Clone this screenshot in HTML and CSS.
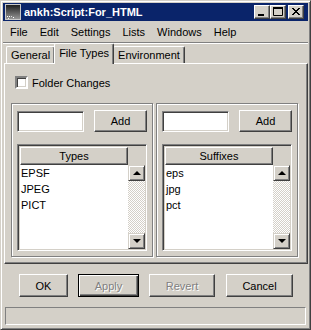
FILE: index.html
```html
<!doctype html>
<html lang="en">
  <head>
    <meta charset="UTF-8" />
    <title>ankh:Script:For_HTML</title>
    <link rel="stylesheet" href="styles.css">
  </head>
  <body>
    <div class="window">
      <div class="titlebar">
        <svg class="app-icon" width="16" height="16" viewBox="0 0 16 16">
          <defs>
            <linearGradient id="ig" x1="0" y1="0" x2="0" y2="1">
              <stop offset="0" stop-color="#1a1a1a" />
              <stop offset="1" stop-color="#9a9a9a" />
            </linearGradient>
          </defs>
          <rect x="0.5" y="0.5" width="15" height="15" fill="url(#ig)" stroke="#c8c8c8" />
          <rect x="2" y="12" width="1" height="1" fill="#fff" />
          <rect x="4" y="12" width="1" height="1" fill="#fff" />
          <rect x="6" y="12" width="1" height="1" fill="#ddd" />
          <rect x="8" y="13" width="1" height="1" fill="#fff" />
          <rect x="3" y="14" width="1" height="1" fill="#eee" />
        </svg>
        <span class="title">ankh:Script:For_HTML</span>
        <span class="caption-btns">
          <span class="cap-btn">
            <svg width="14" height="12" viewBox="0 0 14 12"><rect x="3" y="8" width="6" height="2" fill="#000" /></svg>
          </span>
          <span class="cap-btn">
            <svg width="14" height="12" viewBox="0 0 14 12"><path d="M2.5 1.5h9v8h-9z" fill="none" stroke="#000" /><rect x="2" y="1" width="10" height="2" fill="#000" /></svg>
          </span>
          <span class="cap-btn close">
            <svg width="14" height="12" viewBox="0 0 14 12"><path d="M3 2l7 7M4 2l7 7M10 2l-7 7M11 2l-7 7" stroke="#000" stroke-width="1" /></svg>
          </span>
        </span>
      </div>

      <div class="menubar">
        <span class="menu">File</span>
        <span class="menu">Edit</span>
        <span class="menu">Settings</span>
        <span class="menu">Lists</span>
        <span class="menu">Windows</span>
        <span class="menu">Help</span>
      </div>
      <div class="sep"></div>

      <div class="tabs">
        <span class="tab">General</span>
        <span class="tab active">File Types</span>
        <span class="tab">Environment</span>
      </div>

      <div class="panel">
        <label class="check"><span class="checkbox"></span>Folder Changes</label>

        <div class="groups">
          <div class="group">
            <div class="add-row">
              <span class="field"></span>
              <span class="btn add">Add</span>
            </div>
            <div class="listbox">
              <div class="list-head">Types</div>
              <div class="corner"></div>
              <div class="items">
                <div class="item">EPSF</div>
                <div class="item">JPEG</div>
                <div class="item">PICT</div>
              </div>
              <div class="scrollbar">
                <span class="arrow up"></span>
                <span class="track"></span>
                <span class="arrow down"></span>
              </div>
            </div>
          </div>

          <div class="group">
            <div class="add-row">
              <span class="field"></span>
              <span class="btn add">Add</span>
            </div>
            <div class="listbox">
              <div class="list-head">Suffixes</div>
              <div class="corner"></div>
              <div class="items">
                <div class="item">eps</div>
                <div class="item">jpg</div>
                <div class="item">pct</div>
              </div>
              <div class="scrollbar">
                <span class="arrow up"></span>
                <span class="track"></span>
                <span class="arrow down"></span>
              </div>
            </div>
          </div>
        </div>
      </div>

      <div class="actions">
        <span class="btn ok">OK</span>
        <span class="btn apply default disabled">Apply</span>
        <span class="btn revert disabled">Revert</span>
        <span class="btn cancel">Cancel</span>
      </div>

      <div class="statusbar"></div>
    </div>
  </body>
</html>
```

FILE: styles.css
```css
body {
  margin: 0;
  font-family: "Liberation Sans", Arial, sans-serif;
  font-size: 11px;
  color: #000;
}
.window {
  width: 311px;
  height: 330px;
  box-sizing: border-box;
  background: #d4d0c8;
  border: 1px solid;
  border-color: #d4d0c8 #404040 #404040 #d4d0c8;
  box-shadow: inset 1px 1px #fff, inset -1px -1px #808080;
  padding: 2px;
  display: flex;
  flex-direction: column;
}

/* title bar */
.titlebar {
  height: 18px;
  background: #0a246a;
  color: #fff;
  display: flex;
  align-items: center;
  padding: 0 4px 0 2px;
}
.app-icon {
  margin-right: 3px;
}
.title {
  flex: 1;
  font-weight: bold;
}
.caption-btns {
  display: flex;
}
.cap-btn {
  width: 14px;
  height: 12px;
  background: #d4d0c8;
  border: 1px solid;
  border-color: #fff #404040 #404040 #fff;
  box-shadow: inset -1px -1px #808080;
  display: flex;
}
.cap-btn.close {
  margin-left: 2px;
}

/* menu */
.menubar {
  height: 21px;
  display: flex;
  align-items: center;
  padding-left: 1px;
}
.menu {
  padding: 0 6px;
}
.sep {
  height: 1px;
  border-top: 1px solid #808080;
  background: #fff;
}

/* tabs */
.tabs {
  height: 19px;
  display: flex;
  align-items: flex-end;
  padding-left: 3px;
}
.tab {
  height: 16px;
  line-height: 16px;
  padding: 0 4px;
  border: 1px solid;
  border-color: #fff #404040 transparent #fff;
  border-bottom: none;
  box-shadow: inset -1px 0 #808080;
  border-radius: 2px 2px 0 0;
  background: #d4d0c8;
}
.tab.active {
  height: 20px;
  line-height: 18px;
  margin: 0 -1px -1px;
  position: relative;
  z-index: 1;
}

.panel {
  height: 201px;
  box-sizing: border-box;
  margin-left: 1px;
  border: 1px solid;
  border-color: #fff #404040 #404040 #fff;
  box-shadow: inset -1px -1px #808080;
  padding: 12px 0 0 10px;
}
.check {
  display: flex;
  align-items: center;
  height: 13px;
}
.checkbox {
  width: 9px;
  height: 9px;
  background: #fff;
  border: 2px solid;
  border-color: #808080 #fff #fff #808080;
  box-shadow: inset 1px 1px #404040, inset -1px -1px #d4d0c8;
  margin-right: 4px;
}

.groups {
  display: flex;
  gap: 3px;
  margin: 14px 0 0 -4px;
}
.group {
  width: 142px;
  height: 154px;
  box-sizing: border-box;
  border: 1px solid #808080;
  box-shadow: 1px 1px #fff, inset 1px 1px #fff;
  padding: 7px 5px 0;
}
.add-row {
  display: flex;
  justify-content: space-between;
}
.field {
  width: 67px;
  height: 21px;
  box-sizing: border-box;
  background: #fff;
  border: 1px solid;
  border-color: #808080 #fff #fff #808080;
  box-shadow: inset 1px 1px #404040, inset -1px -1px #d4d0c8;
}
.btn {
  box-sizing: border-box;
  display: flex;
  align-items: center;
  justify-content: center;
  background: #d4d0c8;
  border: 1px solid;
  border-color: #fff #404040 #404040 #fff;
  box-shadow: inset -1px -1px #808080;
}
.btn.add {
  width: 53px;
  height: 22px;
  margin-top: -1px;
}

/* list box */
.listbox {
  margin-top: 12px;
  height: 107px;
  box-sizing: border-box;
  border: 1px solid;
  border-color: #808080 #fff #fff #808080;
  box-shadow: inset 1px 1px #404040, inset -1px -1px #d4d0c8;
  padding: 2px 1px 1px 2px;
  display: grid;
  grid-template-columns: 1fr 17px;
  grid-template-rows: 18px 1fr;
}
.list-head {
  display: flex;
  align-items: center;
  justify-content: center;
  border: 1px solid;
  border-color: #fff #404040 #404040 #fff;
  box-shadow: inset -1px -1px #808080;
}
.corner {
  background: #d4d0c8;
}
.items {
  background: #fff;
}
.item {
  height: 16px;
  line-height: 16px;
  padding-left: 1px;
}
.scrollbar {
  display: flex;
  flex-direction: column;
  background: repeating-conic-gradient(#d4d0c8 0 25%, #fff 0 50%) 0 0 / 2px 2px;
}
.track {
  flex: 1;
}
.arrow {
  height: 16px;
  box-sizing: border-box;
  background: #d4d0c8;
  border: 1px solid;
  border-color: #d4d0c8 #404040 #404040 #d4d0c8;
  box-shadow: inset 1px 1px #fff, inset -1px -1px #808080;
  display: flex;
  align-items: center;
  justify-content: center;
}
.arrow::after {
  content: "";
  width: 0;
  height: 0;
  border-left: 4px solid transparent;
  border-right: 4px solid transparent;
}
.arrow.up::after {
  border-bottom: 4px solid #000;
}
.arrow.down::after {
  border-top: 4px solid #000;
}

/* bottom buttons */
.actions {
  display: flex;
  margin-top: 10px;
  padding-left: 16px;
  height: 23px;
}
.actions .btn {
  height: 23px;
}
.btn.ok {
  width: 49px;
}
.btn.apply {
  width: 61px;
  margin-left: 10px;
}
.btn.revert {
  width: 66px;
  margin-left: 10px;
}
.btn.cancel {
  width: 67px;
  margin-left: 11px;
}
.btn.default {
  border: 1px solid #000;
  box-shadow: inset 1px 1px #fff, inset -1px -1px #404040, inset -2px -2px #808080;
}
.btn.disabled {
  color: #808080;
  text-shadow: 1px 1px #fff;
}

.statusbar {
  margin: 10px 2px 0;
  height: 18px;
  box-sizing: border-box;
  border: 1px solid;
  border-color: #808080 #fff #fff #808080;
}
```
